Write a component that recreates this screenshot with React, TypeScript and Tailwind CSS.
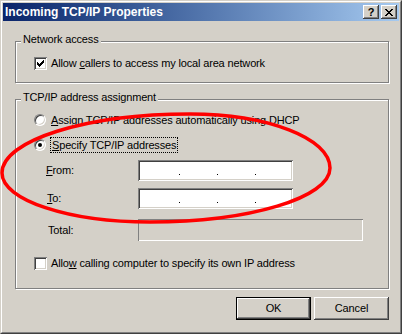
const raised =
    'shadow-[inset_-1px_-1px_#404040,inset_1px_1px_#ffffff,inset_-2px_-2px_#808080]';
const sunken =
    'shadow-[inset_1px_1px_#808080,inset_-1px_-1px_#ffffff,inset_2px_2px_#404040,inset_-2px_-2px_#d4d0c8]';

function CheckBox({ checked }: { checked?: boolean }) {
    return (
        <div className={`flex h-[13px] w-[13px] shrink-0 items-center justify-center bg-white ${sunken}`}>
            {checked && (
                <svg width="7" height="7" viewBox="0 0 7 7" shapeRendering="crispEdges">
                    <rect x="0" y="2" width="1" height="3" fill="#000" />
                    <rect x="1" y="3" width="1" height="3" fill="#000" />
                    <rect x="2" y="4" width="1" height="3" fill="#000" />
                    <rect x="3" y="3" width="1" height="3" fill="#000" />
                    <rect x="4" y="2" width="1" height="3" fill="#000" />
                    <rect x="5" y="1" width="1" height="3" fill="#000" />
                    <rect x="6" y="0" width="1" height="3" fill="#000" />
                </svg>
            )}
        </div>
    );
}

function Radio({ checked }: { checked?: boolean }) {
    return (
        <div className="flex h-[12px] w-[12px] shrink-0 items-center justify-center rounded-full border border-t-[#808080] border-r-white border-b-white border-l-[#808080] bg-white shadow-[inset_1px_1px_#404040,inset_-1px_-1px_#d4d0c8]">
            {checked && <div className="h-[4px] w-[4px] rounded-full bg-black" />}
        </div>
    );
}

function IpField() {
    return (
        <div className={`flex h-[21px] w-[155px] items-end bg-white pb-[6px] pl-[41px] ${sunken}`}>
            {[0, 1, 2].map((i) => (
                <div key={i} className="mr-[37px] h-px w-px bg-black" />
            ))}
        </div>
    );
}

function GroupBox({ label, className, children }: { label: string; className: string; children: React.ReactNode }) {
    return (
        <div
            className={`relative ml-[12px] w-[374px] border border-[#808080] shadow-[inset_1px_1px_#ffffff,1px_1px_#ffffff] ${className}`}
        >
            <span className="absolute top-[-9px] left-[5px] bg-[#d4d0c8] px-[2px] leading-[13px]">{label}</span>
            {children}
        </div>
    );
}

export default function App() {
    return (
        <div className="h-[334px] w-[402px] border border-t-[#d4d0c8] border-r-[#404040] border-b-[#404040] border-l-[#d4d0c8] bg-[#d4d0c8] font-['Liberation_Sans',Arial,sans-serif] text-[11px] tracking-[-0.15px] text-black">
            <div className="relative h-full w-full border border-t-white border-r-[#808080] border-b-[#808080] border-l-white p-px">
                {/* title bar */}
                <div className="flex h-[18px] items-start justify-between bg-gradient-to-r from-[#0a246a] to-[#a6caf0] pr-[2px] pl-[2px]">
                    <span className="text-[12px] leading-[18px] font-bold tracking-normal text-white">
                        Incoming TCP/IP Properties
                    </span>
                    <div className="mt-[2px] flex gap-[2px]">
                        <div className={`flex h-[14px] w-[16px] items-center justify-center bg-[#d4d0c8] text-[11px] leading-none font-bold ${raised}`}>
                            ?
                        </div>
                        <div className={`flex h-[14px] w-[16px] items-center justify-center bg-[#d4d0c8] ${raised}`}>
                            <svg width="8" height="7" viewBox="0 0 8 7" shapeRendering="crispEdges">
                                <path d="M0 0h2v1H0zM6 0h2v1H6zM1 1h2v1H1zM5 1h2v1H5zM2 2h4v1H2zM3 3h2v1H3zM2 4h4v1H2zM1 5h2v1H1zM5 5h2v1H5zM0 6h2v1H0zM6 6h2v1H6z" fill="#000" />
                            </svg>
                        </div>
                    </div>
                </div>

                <GroupBox label="Network access" className="mt-[20px] h-[42px] pt-[15px] pl-[18px]">
                    <div className="flex items-center gap-[4px]">
                        <CheckBox checked />
                        <span className="leading-[13px]">
                            Allow <u>c</u>allers to access my local area network
                        </span>
                    </div>
                </GroupBox>

                <GroupBox label="TCP/IP address assignment" className="mt-[16px] h-[190px] pl-[18px]">
                    <div className="mt-[12px] flex h-[16px] items-center gap-[5px]">
                        <Radio />
                        <span>
                            <u>A</u>ssign TCP/IP addresses automatically using DHCP
                        </span>
                    </div>
                    <div className="mt-[9px] flex h-[16px] items-center gap-[4px]">
                        <Radio checked />
                        <span className="flex h-[16px] items-center border border-dotted border-black pr-[1px] pl-px">
                            <span>
                                <u>S</u>pecify TCP/IP addresses
                            </span>
                        </span>
                    </div>
                    <div className="mt-[7px] ml-[12px] flex h-[21px] items-center">
                        <span className="w-[92px]">
                            <u>F</u>rom:
                        </span>
                        <IpField />
                    </div>
                    <div className="mt-[7px] ml-[12px] flex h-[21px] items-center">
                        <span className="w-[92px] pl-px">
                            <u>T</u>o:
                        </span>
                        <IpField />
                    </div>
                    <div className="mt-[10px] ml-[12px] flex h-[22px] items-center">
                        <span className="w-[92px] pl-[2px]">Total:</span>
                        <div className="h-[22px] w-[225px] shadow-[inset_1px_1px_#808080,inset_-1px_-1px_#ffffff]" />
                    </div>
                    <div className="mt-[16px] flex items-center gap-[4px]">
                        <CheckBox />
                        <span className="leading-[13px]">
                            Allo<u>w</u> calling computer to specify its own IP address
                        </span>
                    </div>
                </GroupBox>

                <div className="mt-[8px] flex justify-end gap-[3px] pr-[10px]">
                    <div className="h-[23px] w-[75px] border border-black">
                        <div className={`flex h-full w-full items-center justify-center ${raised}`}>OK</div>
                    </div>
                    <div className={`flex h-[23px] w-[75px] items-center justify-center ${raised}`}>Cancel</div>
                </div>
            </div>

            {/* red hand-drawn ellipse */}
            <svg className="pointer-events-none absolute top-0 left-0" width="402" height="334" viewBox="0 0 402 334">
                <path
                    d="M2 173 C2 140.4 86.2 114 190 114 C267.3 114 330 138.2 330 168 C330 197.8 249.4 222 150 222 C68.3 222 2 200 2 173 Z"
                    fill="none"
                    stroke="#ff0000"
                    strokeWidth="3.5"
                />
            </svg>
        </div>
    );
}
